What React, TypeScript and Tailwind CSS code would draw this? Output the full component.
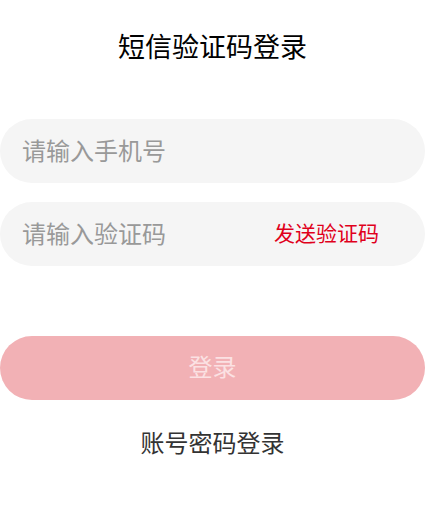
import { useState } from "react";

const cjk = "font-['Noto_Sans_CJK_SC','Noto_Sans',sans-serif]";

export default function App() {
  const [phone, setPhone] = useState("");
  const [code, setCode] = useState("");

  return (
    <div className={`min-h-[517px] bg-white ${cjk}`}>
      <div className="flex w-[425px] flex-col">
        <h1 className="mt-[32px] text-center text-[27px] leading-[28px] font-normal text-black">
          短信验证码登录
        </h1>

        <div className="mt-[59px] flex h-16 items-center rounded-full bg-[#f5f5f5] pb-[3px] pl-[22px]">
          <input
            value={phone}
            onChange={(e) => setPhone(e.target.value)}
            placeholder="请输入手机号"
            className="w-full bg-transparent text-[24px] text-[#333] outline-none placeholder:text-[#999]"
          />
        </div>

        <div className="mt-[19px] flex h-16 items-center rounded-full bg-[#f5f5f5] pb-[3px] pl-[22px] pr-[46px]">
          <input
            value={code}
            onChange={(e) => setCode(e.target.value)}
            placeholder="请输入验证码"
            className="min-w-0 flex-1 bg-transparent text-[24px] text-[#333] outline-none placeholder:text-[#999]"
          />
          <button className="shrink-0 text-[21px] text-[#e0001b]">发送验证码</button>
        </div>

        <button className="mt-[70px] flex h-16 items-center justify-center rounded-full bg-[#f2b1b5] pb-[5px] text-[24px] text-[#fbe1e3]">
          登录
        </button>

        <button className="mt-[30px] text-center text-[24px] leading-[24px] text-[#333]">
          账号密码登录
        </button>
      </div>
    </div>
  );
}
